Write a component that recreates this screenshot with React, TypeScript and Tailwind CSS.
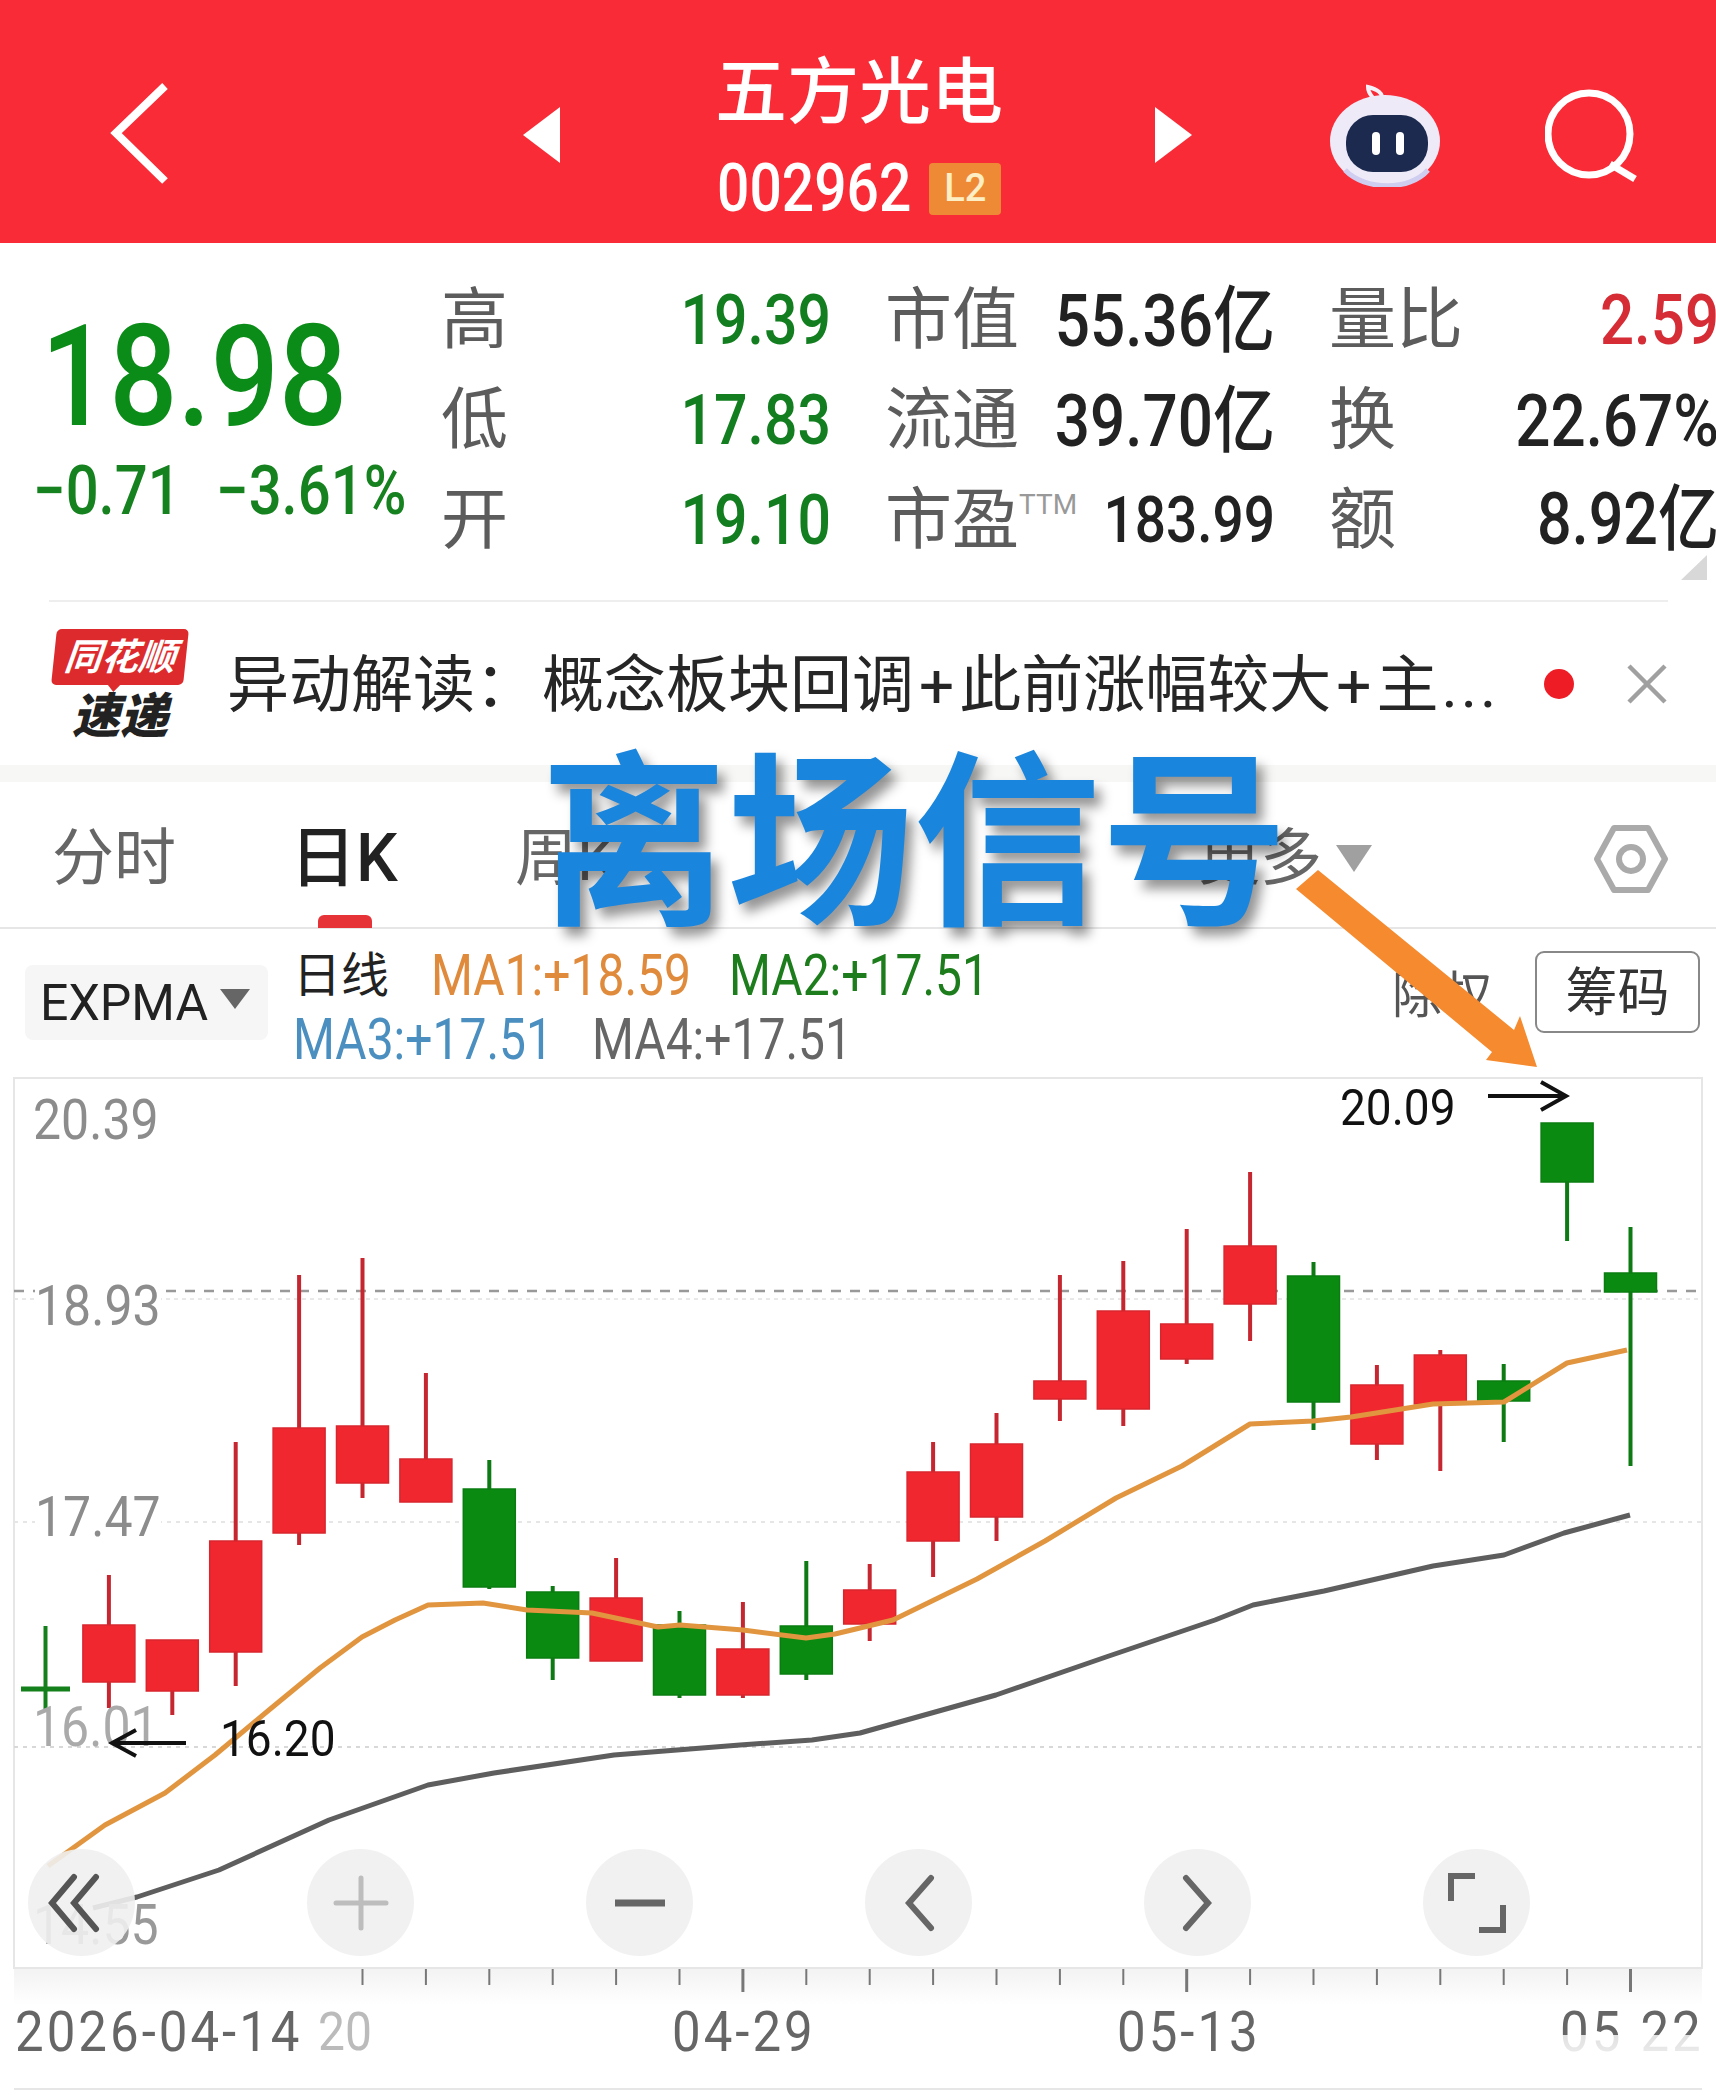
const candles: [number, number, number, number, string][] = [
  [1575, 1625, 1682, 1708, "r"],
  [1640, 1640, 1691, 1715, "r"],
  [1442, 1541, 1652, 1686, "r"],
  [1275, 1428, 1533, 1545, "r"],
  [1258, 1426, 1483, 1498, "r"],
  [1373, 1459, 1502, 1502, "r"],
  [1460, 1489, 1587, 1589, "g"],
  [1586, 1592, 1658, 1680, "g"],
  [1558, 1598, 1661, 1661, "r"],
  [1611, 1625, 1695, 1698, "g"],
  [1602, 1649, 1695, 1698, "r"],
  [1561, 1626, 1674, 1680, "g"],
  [1564, 1590, 1624, 1641, "r"],
  [1442, 1472, 1541, 1577, "r"],
  [1413, 1444, 1517, 1541, "r"],
  [1275, 1381, 1399, 1421, "r"],
  [1261, 1311, 1409, 1426, "r"],
  [1229, 1324, 1359, 1364, "r"],
  [1172, 1246, 1304, 1341, "r"],
  [1262, 1276, 1402, 1430, "g"],
  [1365, 1385, 1444, 1460, "r"],
  [1350, 1355, 1404, 1471, "r"],
  [1364, 1381, 1401, 1442, "g"],
  [1123, 1123, 1182, 1241, "g"],
  [1227, 1273, 1292, 1466, "g"],
];

const ma1 =
  "48,1866 105,1825 165,1793 215,1755 269,1710 320,1668 362,1637 395,1620 428,1605 483,1603 527,1610 592,1613 658,1627 680,1625 743,1630 806,1638 835,1634 860,1628 893,1620 977,1579 1045,1541 1116,1498 1182,1466 1250,1424 1313,1421 1351,1417 1433,1404 1504,1402 1567,1363 1627,1350";
const ma2 =
  "93,1908 137,1897 219,1870 329,1820 428,1785 494,1773 614,1755 740,1745 812,1740 860,1733 996,1695 1106,1657 1215,1620 1253,1605 1324,1591 1433,1566 1504,1555 1564,1533 1630,1515";

const tickXs = Array.from({ length: 21 }, (_, i) => 45.5 + 63.4 * (i + 5));

function Num({ children, className = "" }: { children: React.ReactNode; className?: string }) {
  return <span className={`inline-block scale-y-[1.18] whitespace-nowrap ${className}`}>{children}</span>;
}

function StatLabel({ children }: { children: React.ReactNode }) {
  return <span className="text-[67px] font-normal leading-[100px] text-[#5c5c5c]">{children}</span>;
}

function RoundButton({ children }: { children: React.ReactNode }) {
  return (
    <div className="flex h-[107px] w-[107px] items-center justify-center rounded-full bg-[#f0f0f0]/90">
      <svg width="70" height="70" viewBox="0 0 70 70" fill="none" strokeLinecap="round">
        {children}
      </svg>
    </div>
  );
}

function Header() {
  return (
    <div className="flex h-[243px] items-center bg-[#f92b36] pl-[110px] pt-[26px]">
      <svg width="60" height="104" viewBox="0 0 60 104" fill="none">
        <path d="M55 3 L6 50 L55 98" stroke="white" strokeWidth="8" />
      </svg>
      <svg className="ml-[353px]" width="38" height="56" viewBox="0 0 38 56" fill="white">
        <path d="M0 28 L37 0 V56 Z" />
      </svg>
      <div className="ml-[154px] w-[292px] text-white">
        <div className="text-[72px] font-medium leading-[80px]">五方光电</div>
        <div className="ml-[2px] mt-[28px] flex items-center">
          <Num className="text-[57px] font-medium leading-[56px]">002962</Num>
          <span className="ml-[18px] flex h-[52px] w-[72px] items-center justify-center rounded-[4px] bg-[#ee8a36] text-[38px] font-medium text-[#fdeec4]">
            L2
          </span>
        </div>
      </div>
      <svg className="ml-[147px]" width="38" height="56" viewBox="0 0 38 56" fill="white">
        <path d="M38 28 L1 0 V56 Z" />
      </svg>
      <svg className="ml-[138px]" width="110" height="104" viewBox="1330 78 110 104" fill="none">
        <path d="M1381 96 C1385 88 1376 84 1368 82 C1368 90 1374 92 1376 98" stroke="#f4f1f8" strokeWidth="4" />
        <ellipse cx="1385" cy="136" rx="55" ry="46" fill="#eeeaf8" />
        <path d="M1345 165 C1365 186 1410 186 1428 165" stroke="#cfcdf0" strokeWidth="5" />
        <rect x="1346" y="110" width="82" height="57" rx="27" fill="#1b2a4e" />
        <rect x="1372" y="127" width="8" height="23" rx="4" fill="white" />
        <rect x="1396" y="127" width="8" height="23" rx="4" fill="white" />
      </svg>
      <svg className="ml-[105px]" width="95" height="100" viewBox="1545 84 95 100" fill="none">
        <circle cx="1589" cy="133" r="41" stroke="white" strokeWidth="7" />
        <path d="M1610 163 L1635 178" stroke="white" strokeWidth="7" />
      </svg>
    </div>
  );
}

function Stats() {
  const label = "flex items-center justify-between";
  return (
    <div className="relative flex h-[357px] bg-white pt-[27px]">
      <div className="w-[441px] shrink-0">
        <div className="ml-[41px] mt-[47px] text-[120px] font-medium leading-[120px] text-[#0b8c18]">
          <Num>18.98</Num>
        </div>
        <div className="ml-[33px] mt-[23px] flex text-[58px] font-medium leading-[60px] text-[#16821f]">
          <Num className="w-[183px]">−0.71</Num>
          <Num>−3.61%</Num>
        </div>
      </div>
      <div className="grid h-[300px] shrink-0 grid-cols-[390px_390px_390px] gap-x-[54px] text-[60px] font-medium">
        <div className={label}>
          <StatLabel>高</StatLabel>
          <Num className="text-[59px] text-[#137e1f]">19.39</Num>
        </div>
        <div className={label}>
          <StatLabel>市值</StatLabel>
          <Num className="text-[62px] text-[#222]">55.36亿</Num>
        </div>
        <div className={label}>
          <StatLabel>量比</StatLabel>
          <Num className="text-[#d62c35]">2.59</Num>
        </div>
        <div className={label}>
          <StatLabel>低</StatLabel>
          <Num className="text-[59px] text-[#137e1f]">17.83</Num>
        </div>
        <div className={label}>
          <StatLabel>流通</StatLabel>
          <Num className="text-[62px] text-[#222]">39.70亿</Num>
        </div>
        <div className={label}>
          <StatLabel>换</StatLabel>
          <Num className="text-[62px] text-[#222]">22.67%</Num>
        </div>
        <div className={label}>
          <StatLabel>开</StatLabel>
          <Num className="text-[59px] text-[#137e1f]">19.10</Num>
        </div>
        <div className={label}>
          <span className="flex items-start">
            <StatLabel>市盈</StatLabel>
            <span className="mt-[20px] text-[28px] font-normal leading-[30px] text-[#999]">TTM</span>
          </span>
          <Num className="text-[55px] text-[#222]">183.99</Num>
        </div>
        <div className={label}>
          <StatLabel>额</StatLabel>
          <Num className="text-[61px] text-[#222]">8.92亿</Num>
        </div>
      </div>
      <svg className="absolute right-[9px] bottom-[20px]" width="26" height="25" viewBox="0 0 26 25">
        <path d="M0 25 H26 V0 Z" fill="#d8d8d8" />
      </svg>
    </div>
  );
}

function Banner() {
  return (
    <div className="h-[165px] bg-white pl-[49px] pr-[48px]">
      <div className="flex h-full items-center border-t-2 border-[#eeeeee]">
        <div className="ml-[3px] flex w-[136px] shrink-0 flex-col items-center">
          <div className="relative flex h-[56px] w-[132px] -skew-x-6 items-center justify-center rounded-[5px] bg-[#dd2a2c]">
            <span className="text-[37px] font-bold italic leading-none text-white">同花顺</span>
            <span className="absolute bottom-[-7px] left-[56px] h-0 w-0 border-x-[7px] border-t-[8px] border-x-transparent border-t-[#dd2a2c]" />
          </div>
          <span className="mt-[10px] text-[48px] font-black italic leading-[44px] text-[#222]">速递</span>
        </div>
        <div className="ml-[39px] mt-[4px] flex w-[1317px] shrink-0 items-center whitespace-nowrap text-[62px] leading-none text-[#262626]">
          <span className="w-[315px]">异动解读：</span>
          <span>概念板块回调</span>
          <span className="mx-[5px]">+</span>
          <span>此前涨幅较大</span>
          <span className="mx-[5px]">+</span>
          <span className="tracking-[3px]">主...</span>
        </div>
        <span className="h-[30px] w-[30px] shrink-0 rounded-full bg-[#ee1c25]" />
        <svg className="ml-[53px] shrink-0" width="40" height="40" viewBox="0 0 40 40" fill="none">
          <path d="M2 2 L38 38 M38 2 L2 38" stroke="#a0a0a0" strokeWidth="4.5" />
        </svg>
      </div>
    </div>
  );
}

function Tabs() {
  return (
    <>
      <div className="h-[17px] bg-[#f7f7f5]" />
      <div className="flex h-[147px] items-center border-b-2 border-[#e6e6e6] bg-white pl-[52px] pt-[8px] text-[62px] leading-none text-[#666]">
        <span className="w-[238px]">分时</span>
        <span className="relative w-[225px] text-[66px] font-medium text-[#222]">
          日K
          <span className="absolute left-[28px] top-[89px] h-[13px] w-[54px] rounded-t-[6px] bg-[#e63338]" />
        </span>
        <span className="w-[683px]">周K</span>
        <span>更多</span>
        <svg className="ml-[14px]" width="36" height="27" viewBox="0 0 36 27">
          <path d="M0 0 H36 L18 27 Z" fill="#a0a0a0" />
        </svg>
        <svg className="ml-[222px]" width="74" height="68" viewBox="0 0 74 68" fill="none">
          <path d="M20 3 H54 L71 34 L54 65 H20 L3 34 Z" stroke="#aaaaaa" strokeWidth="6" strokeLinejoin="round" />
          <circle cx="37" cy="34" r="12" stroke="#aaaaaa" strokeWidth="6" />
        </svg>
      </div>
    </>
  );
}

function Legend() {
  return (
    <div className="flex h-[148px] bg-white pl-[25px]">
      <div className="mt-[36px] flex h-[75px] w-[243px] shrink-0 items-center rounded-[8px] bg-[#f6f6f6] pl-[15px] text-[50px] leading-none text-[#222]">
        EXPMA
        <svg className="ml-[12px] mb-[8px]" width="30" height="20" viewBox="0 0 30 20">
          <path d="M0 0 H30 L15 20 Z" fill="#666" />
        </svg>
      </div>
      <div className="ml-[25px] mt-[15px] w-[1099px] shrink-0 text-[48px] leading-[64px]">
        <div className="flex items-center">
          <span className="w-[138px] text-[#222]">日线</span>
          <Num className="w-[298px] scale-y-[1.08] text-[#e08a3c]">MA1:+18.59</Num>
          <Num className="scale-y-[1.08] text-[#1d7d1d]">MA2:+17.51</Num>
        </div>
        <div className="flex items-center">
          <Num className="w-[299px] scale-y-[1.08] text-[#4a8fbf]">MA3:+17.51</Num>
          <Num className="scale-y-[1.08] text-[#666]">MA4:+17.51</Num>
        </div>
      </div>
      <span className="mt-[42px] w-[143px] shrink-0 whitespace-nowrap text-[50px] leading-none text-[#555]">除权</span>
      <div className="mt-[22px] flex h-[82px] w-[165px] shrink-0 items-center justify-center whitespace-nowrap rounded-[9px] border-2 border-[#888] pt-[3px] text-[52px] leading-none text-[#333]">
        筹码
      </div>
    </div>
  );
}

function Chart() {
  const axisLabel = "absolute left-[33px] scale-y-[1.1] text-[50px] leading-[50px] text-[#8c8c8c]";
  return (
    <div className="relative h-[892px] bg-white">
      <svg width="1716" height="892" viewBox="0 1077 1716 892" fill="none">
        <path d="M14 1078 H1702 V1968 H14 Z" stroke="#e6e6e6" strokeWidth="2" />
        <path d="M14 1291 H1702" stroke="#999" strokeWidth="2.5" strokeDasharray="10 9" />
        <path d="M14 1299 H1702" stroke="#e8e8e8" strokeWidth="2" strokeDasharray="4 4" />
        <path d="M14 1522 H1702" stroke="#e6e6e6" strokeWidth="2" strokeDasharray="4 5" />
        <path d="M14 1747 H1702" stroke="#d8d8d8" strokeWidth="2" strokeDasharray="4 5" />
        <path d="M45.5 1626 V1710" stroke="#14801c" strokeWidth="4" />
        <path d="M21 1689 H70" stroke="#14801c" strokeWidth="5" />
        {candles.map(([high, top, bottom, low, c], i) => {
          const x = 45.5 + 63.4 * (i + 1);
          const red = c === "r";
          return (
            <g key={i}>
              <path d={`M${x} ${high} V${low}`} stroke={red ? "#c5262f" : "#0e7a14"} strokeWidth="4" />
              <rect
                x={x - 26}
                y={top}
                width="52"
                height={bottom - top}
                fill={red ? "#f0272f" : "#0a8a10"}
                stroke={red ? "#d9262e" : "#0a7d10"}
                strokeWidth="1.5"
              />
            </g>
          );
        })}
        <polyline points={ma1} stroke="#e1953f" strokeWidth="5" strokeLinejoin="round" />
        <polyline points={ma2} stroke="#5e5e5e" strokeWidth="5" strokeLinejoin="round" />
      </svg>

      <span className={`${axisLabel} top-[18px]`}>20.39</span>
      <span className={`${axisLabel} left-[35px] top-[204px] bg-white`}>18.93</span>
      <span className={`${axisLabel} left-[35px] top-[415px] bg-white`}>17.47</span>
      <span className={`${axisLabel} top-[625px] text-[#aaa]`}>16.01</span>
      <span className={`${axisLabel} top-[823px] text-[#999]`}>14.55</span>

      <span className="absolute left-[1340px] top-[7px] scale-y-[1.1] text-[46px] leading-[46px] text-[#111]">20.09</span>
      <svg className="absolute left-[1486px] top-[2px]" width="84" height="34" viewBox="0 0 84 34" fill="none">
        <path d="M2 17 H80 M55 3 L80 17 L55 31" stroke="#111" strokeWidth="4" />
      </svg>
      <span className="absolute left-[220px] top-[638px] scale-y-[1.1] text-[46px] leading-[46px] text-[#111]">16.20</span>
      <svg className="absolute left-[108px] top-[650px]" width="80" height="32" viewBox="0 0 80 32" fill="none">
        <path d="M78 16 H4 M28 3 L4 16 L28 29" stroke="#111" strokeWidth="4" />
      </svg>

      <div className="absolute left-[28px] top-[772px] flex gap-[172px]">
        <RoundButton>
          <path d="M27 9 L5 35 L27 61 M49 9 L27 35 L49 61" stroke="#555" strokeWidth="6" />
        </RoundButton>
        <RoundButton>
          <path d="M10 35 H60 M35 10 V60" stroke="#bdbdbd" strokeWidth="5" />
        </RoundButton>
        <RoundButton>
          <path d="M10 35 H60" stroke="#666" strokeWidth="7" strokeLinecap="butt" />
        </RoundButton>
        <RoundButton>
          <path d="M47 10 L25 35 L47 60" stroke="#666" strokeWidth="6" />
        </RoundButton>
        <RoundButton>
          <path d="M23 10 L45 35 L23 60" stroke="#666" strokeWidth="6" />
        </RoundButton>
        <RoundButton>
          <path d="M9 33 V8 H33 M61 37 V62 H37" stroke="#666" strokeWidth="6" strokeLinecap="butt" />
        </RoundButton>
      </div>
    </div>
  );
}

function Axis() {
  return (
    <div className="relative h-[127px] bg-white">
      <div className="absolute inset-x-[14px] top-0 h-[36px] bg-gradient-to-b from-[#f3f3f3] to-white" />
      <svg className="absolute left-0 top-0" width="1716" height="24" viewBox="0 0 1716 24" fill="none">
        {tickXs.map((x, i) => (
          <path
            key={x}
            d={i === 6 || i === 13 || i === 20 ? `M${x} 0 V23` : `M${x} 0 V16`}
            stroke="#777"
            strokeWidth={i === 6 || i === 13 || i === 20 ? 3 : 2}
          />
        ))}
      </svg>
      <div className="relative flex pl-[15px] pt-[38px] text-[51px] leading-[50px] tracking-[3px] text-[#666]">
        <span className="inline-block w-[303px] shrink-0 origin-left scale-y-[1.1] whitespace-nowrap">2026-04-14</span>
        <span className="inline-block w-[354px] shrink-0 scale-y-[1.1] text-[48px] tracking-normal text-[#bbb]">20</span>
        <span className="inline-block w-[445px] shrink-0 scale-y-[1.1]">04-29</span>
        <span className="inline-block w-[443px] shrink-0 scale-y-[1.1]">05-13</span>
        <span className="inline-block shrink-0 scale-y-[1.1]">
          05<span className="text-transparent">-</span>22
        </span>
      </div>
      <div className="absolute bottom-[7px] right-0 h-[54px] w-[190px] bg-gradient-to-b from-white/80 to-white" />
      <div className="absolute inset-x-[14px] bottom-[6px] h-[2px] bg-[#e6e6e6]" />
    </div>
  );
}

export default function App() {
  return (
    <div className="relative h-[2096px] w-[1716px] overflow-hidden bg-white font-['Roboto','Noto_Sans_CJK_SC',sans-serif]">
      <Header />
      <Stats />
      <Banner />
      <Tabs />
      <Legend />
      <Chart />
      <Axis />

      <div className="absolute left-[540px] top-[737px] whitespace-nowrap text-[187px] font-bold leading-[220px] text-[#1a85dd] [text-shadow:7px_9px_12px_rgba(0,0,0,0.42)]">
        离场信号
      </div>
      <svg className="absolute left-[1290px] top-[865px]" width="255" height="210" viewBox="1290 865 255 210">
        <path d="M1318 870 L1514 1030 L1520 1016 L1537 1067 L1486 1060 L1492 1052 L1296 889 Z" fill="#f58a2e" />
      </svg>
    </div>
  );
}
